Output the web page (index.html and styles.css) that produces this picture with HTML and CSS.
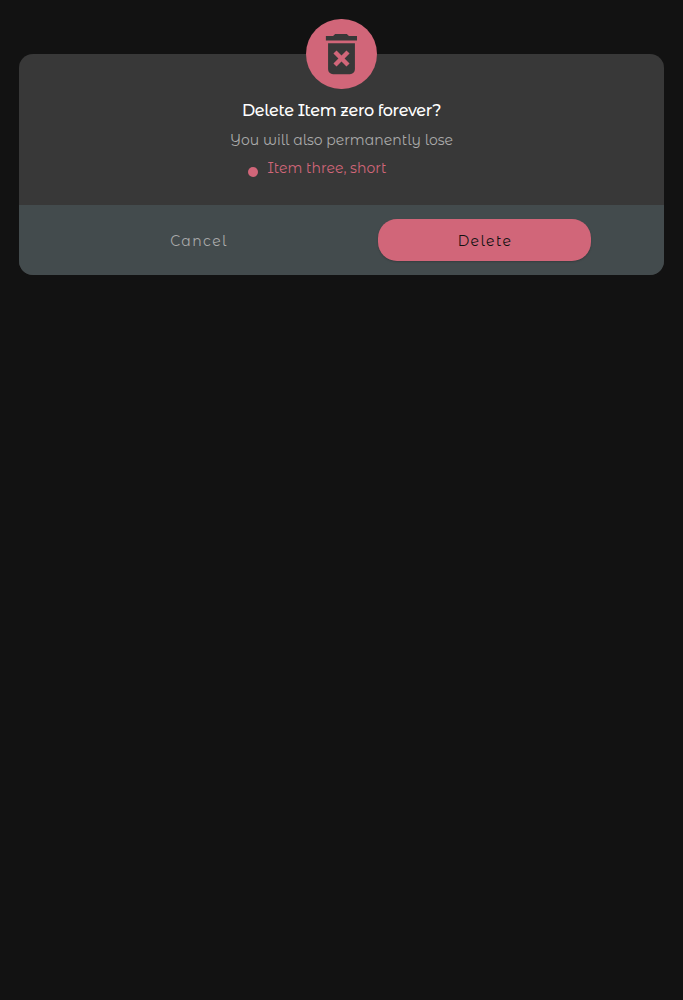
FILE: index.html
```html
<!DOCTYPE html>
<html lang="en">
<head>
<meta charset="utf-8">
<title>Delete item</title>
<link rel="stylesheet" href="styles.css">
</head>
<body>
<main class="dialog" role="dialog" aria-labelledby="dialog-title">
  <div class="badge">
    <svg class="badge-icon" viewBox="0 0 71 71" aria-hidden="true">
      <path fill-rule="evenodd" d="M20 17.2h7.2l2.1-2.2h11.8l2.1 2.2h8.1v4.5H20zM22.2 24.3h27v26.3a5 5 0 0 1-5 5h-17a5 5 0 0 1-5-5zM30.7 31.6l-3.1 3.1 5 5-5 5 3.1 3.1 5-5 5 5 3.1-3.1-5-5 5-5-3.1-3.1-5 5z"/>
    </svg>
  </div>
  <section class="content">
    <h1 class="title" id="dialog-title">Delete Item zero forever?</h1>
    <p class="message">You will also permanently lose</p>
    <ul class="items">
      <li class="item"><span class="item-text">Item three, short</span></li>
    </ul>
  </section>
  <footer class="actions">
    <button class="button cancel" type="button">Cancel</button>
    <button class="button delete" type="button">Delete</button>
  </footer>
</main>
</body>
</html>
```
FILE: styles.css
```css
* {
  box-sizing: border-box;
}

body {
  margin: 0;
  padding: 54px 19px 0;
  min-height: 100vh;
  background: #121212;
  font-family: "Montserrat Alternates", Lato, sans-serif;
}

.dialog {
  position: relative;
  height: 221px;
  display: flex;
  flex-direction: column;
  border-radius: 14px;
  background: #383838;
}

.badge {
  position: absolute;
  top: -35.5px;
  left: 50%;
  width: 70.6px;
  height: 70.6px;
  margin-left: -35.3px;
  border-radius: 50%;
  background: #d16679;
}

.badge-icon {
  display: block;
  width: 70.6px;
  height: 70.6px;
  fill: #383838;
}

.content {
  height: 151px;
  padding-top: 45px;
  text-align: center;
}

.title {
  margin: 0;
  font-size: 16px;
  line-height: 24px;
  font-weight: 500;
  letter-spacing: -0.32px;
  color: #fff;
}

.message {
  margin: 6px 0 0;
  font-size: 14px;
  line-height: 22px;
  letter-spacing: 0.02px;
  color: #aaa;
}

.items {
  width: 187px;
  margin: 6px auto 0;
  padding: 0;
  list-style: none;
}

.item {
  display: flex;
  gap: 9.5px;
  font-size: 14px;
  line-height: 22px;
  letter-spacing: 0.03px;
  color: #d16679;
}

.item::before {
  content: "";
  width: 10px;
  height: 10px;
  margin-top: 10px;
  border-radius: 50%;
  background: #d16679;
}

.actions {
  height: 70px;
  display: flex;
  justify-content: space-evenly;
  align-items: center;
  border-radius: 0 0 14px 14px;
  background: #434b4d;
}

.button {
  width: 213px;
  height: 42.6px;
  padding: 1px 0 0 1px;
  border: 0;
  border-radius: 19px;
  background: none;
  font: 400 14px "Montserrat Alternates", Lato, sans-serif;
  letter-spacing: 1.4px;
}

.cancel {
  color: #aaa;
}

.delete {
  background: #d16679;
  color: #121212;
  box-shadow: 0 1px 2px rgba(0, 0, 0, 0.2);
}
```
